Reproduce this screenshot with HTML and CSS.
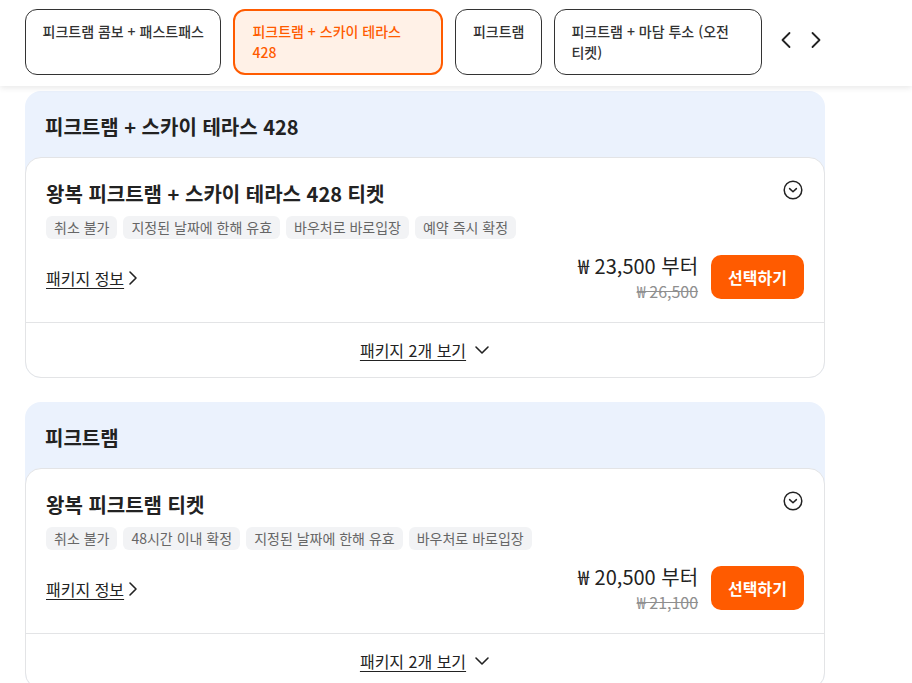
FILE: index.html
```html
<!DOCTYPE html>
<html lang="ko">
<head>
<meta charset="utf-8">
<title>피크트램 패키지</title>
<link rel="stylesheet" href="styles.css">
</head>
<body>
<header class="topbar">
  <nav class="tabs">
    <button class="tab">피크트램 콤보 + 패스트패스</button>
    <button class="tab tab-active">피크트램 + 스카이 테라스 428</button>
    <button class="tab">피크트램</button>
    <button class="tab">피크트램 + 마담 투소 (오전 티켓)</button>
  </nav>
  <div class="arrows">
    <button class="arrow" aria-label="이전"><svg width="12" height="18" viewBox="0 0 12 18"><path d="M9.5 2 L2.5 9 L9.5 16" fill="none" stroke="#222" stroke-width="1.8" stroke-linecap="round" stroke-linejoin="round"/></svg></button>
    <button class="arrow" aria-label="다음"><svg width="12" height="18" viewBox="0 0 12 18"><path d="M2.5 2 L9.5 9 L2.5 16" fill="none" stroke="#222" stroke-width="1.8" stroke-linecap="round" stroke-linejoin="round"/></svg></button>
  </div>
</header>

<main class="list">
  <section class="group">
    <h2 class="group-title">피크트램 + 스카이 테라스 428</h2>
    <article class="card">
      <div class="card-body">
        <div class="card-head">
          <h3 class="card-title">왕복 피크트램 + 스카이 테라스 428 티켓</h3>
          <svg class="circle-icon" width="20" height="20" viewBox="0 0 20 20"><circle cx="10" cy="10" r="8.8" fill="none" stroke="#222" stroke-width="1.5"/><path d="M6.6 8.6 L10 11.8 L13.4 8.6" fill="none" stroke="#222" stroke-width="1.5" stroke-linecap="round" stroke-linejoin="round"/></svg>
        </div>
        <ul class="tags">
          <li class="tag">취소 불가</li>
          <li class="tag">지정된 날짜에 한해 유효</li>
          <li class="tag">바우처로 바로입장</li>
          <li class="tag">예약 즉시 확정</li>
        </ul>
        <div class="row">
          <a class="info-link" href="#"><span class="u">패키지 정보</span><svg width="10" height="16" viewBox="0 0 10 16"><path d="M2 2 L8 8 L2 14" fill="none" stroke="#222" stroke-width="1.6" stroke-linecap="round" stroke-linejoin="round"/></svg></a>
          <div class="buy">
            <div class="prices">
              <div class="price">₩ 23,500 부터</div>
              <div class="old-price">₩ 26,500</div>
            </div>
            <button class="select-btn">선택하기</button>
          </div>
        </div>
      </div>
      <div class="card-foot">
        <span class="u">패키지 2개 보기</span>
        <svg width="16" height="10" viewBox="0 0 16 10"><path d="M2 2 L8 8 L14 2" fill="none" stroke="#222" stroke-width="1.6" stroke-linecap="round" stroke-linejoin="round"/></svg>
      </div>
    </article>
  </section>

  <section class="group">
    <h2 class="group-title">피크트램</h2>
    <article class="card">
      <div class="card-body">
        <div class="card-head">
          <h3 class="card-title">왕복 피크트램 티켓</h3>
          <svg class="circle-icon" width="20" height="20" viewBox="0 0 20 20"><circle cx="10" cy="10" r="8.8" fill="none" stroke="#222" stroke-width="1.5"/><path d="M6.6 8.6 L10 11.8 L13.4 8.6" fill="none" stroke="#222" stroke-width="1.5" stroke-linecap="round" stroke-linejoin="round"/></svg>
        </div>
        <ul class="tags">
          <li class="tag">취소 불가</li>
          <li class="tag">48시간 이내 확정</li>
          <li class="tag">지정된 날짜에 한해 유효</li>
          <li class="tag">바우처로 바로입장</li>
        </ul>
        <div class="row">
          <a class="info-link" href="#"><span class="u">패키지 정보</span><svg width="10" height="16" viewBox="0 0 10 16"><path d="M2 2 L8 8 L2 14" fill="none" stroke="#222" stroke-width="1.6" stroke-linecap="round" stroke-linejoin="round"/></svg></a>
          <div class="buy">
            <div class="prices">
              <div class="price">₩ 20,500 부터</div>
              <div class="old-price">₩ 21,100</div>
            </div>
            <button class="select-btn">선택하기</button>
          </div>
        </div>
      </div>
      <div class="card-foot">
        <span class="u">패키지 2개 보기</span>
        <svg width="16" height="10" viewBox="0 0 16 10"><path d="M2 2 L8 8 L14 2" fill="none" stroke="#222" stroke-width="1.6" stroke-linecap="round" stroke-linejoin="round"/></svg>
      </div>
    </article>
  </section>
</main>
</body>
</html>
```

FILE: styles.css
```css
* { box-sizing: border-box; }
html, body { margin: 0; padding: 0; background: #fff; }
body {
  font-family: "Noto Sans CJK KR", "Noto Sans", sans-serif;
  color: #222;
  width: 912px;
  height: 683px;
  overflow: hidden;
}
button { font-family: inherit; cursor: pointer; }

.topbar {
  position: relative;
  z-index: 2;
  height: 86px;
  background: #fff;
  box-shadow: 0 2px 6px rgba(0, 0, 0, 0.09);
  display: flex;
  align-items: flex-start;
  padding: 9px 0 0 25px;
}
.tabs { display: flex; gap: 12px; }
.tab {
  box-sizing: content-box;
  height: 42px;
  max-width: 173px;
  padding: 11px 16.5px;
  border: 1px solid #333;
  border-radius: 12px;
  background: #fff;
  color: #333;
  font-size: 14px;
  font-weight: 500;
  line-height: 21px;
  text-align: left;
  white-space: normal;
  display: flex;
  align-items: flex-start;
}
.tab-active {
  border: 2px solid #ff5b00;
  background: #fff1e7;
  color: #ff5b00;
  height: 42px;
  padding: 10px 16px 10px 17px;
}
.arrows {
  display: flex;
  gap: 12px;
  margin: 22px 0 0 15px;
}
.arrow {
  width: 18px;
  height: 18px;
  padding: 0;
  border: 0;
  background: none;
  display: flex;
  align-items: center;
  justify-content: center;
}

.list {
  width: 800px;
  margin: 5px 0 0 25px;
  display: flex;
  flex-direction: column;
  gap: 24px;
}
.group {
  background: #ebf2fd;
  border-radius: 16px;
}
.group-title {
  margin: 0;
  padding: 22px 20px 16px;
  font-size: 20px;
  line-height: 28px;
  font-weight: 600;
  color: #222;
}
.card {
  background: #fff;
  border: 1px solid #e3e4e6;
  border-radius: 16px;
}
.card-body { padding: 22px 20px 19px; }
.card-head {
  display: flex;
  justify-content: space-between;
  align-items: flex-start;
}
.card-title {
  margin: 0;
  font-size: 20px;
  line-height: 28px;
  font-weight: 700;
  color: #222;
}
.circle-icon { margin: 0 1px 0 0; }
.tags {
  list-style: none;
  margin: 8px 0 0;
  padding: 0;
  display: flex;
  gap: 6px;
}
.tag {
  height: 23px;
  line-height: 23px;
  padding: 0 8px;
  font-size: 14px;
  color: #666;
  background: #f2f3f5;
  border-radius: 6px;
}
.row {
  margin-top: 12px;
  display: flex;
  justify-content: space-between;
  align-items: center;
}
.info-link {
  display: flex;
  align-items: center;
  gap: 4px;
  color: #222;
  text-decoration: none;
  font-size: 16px;
  line-height: 23px;
  margin-top: 2px;
}
.u { text-decoration: underline; text-underline-offset: 3px; }
.buy { display: flex; align-items: center; gap: 13px; }
.prices { text-align: right; }
.price {
  font-size: 20px;
  line-height: 29px;
  color: #222;
}
.old-price {
  font-size: 16px;
  line-height: 23px;
  color: #8f8f8f;
  text-decoration: line-through;
}
.select-btn {
  height: 44px;
  padding: 0 17px;
  border: 0;
  border-radius: 10px;
  background: #ff5b00;
  color: #fff;
  font-size: 16px;
  font-weight: 700;
}
.card-foot {
  height: 55px;
  border-top: 1px solid #e3e4e6;
  display: flex;
  align-items: center;
  justify-content: center;
  gap: 8px;
  font-size: 16px;
  color: #222;
}
```
